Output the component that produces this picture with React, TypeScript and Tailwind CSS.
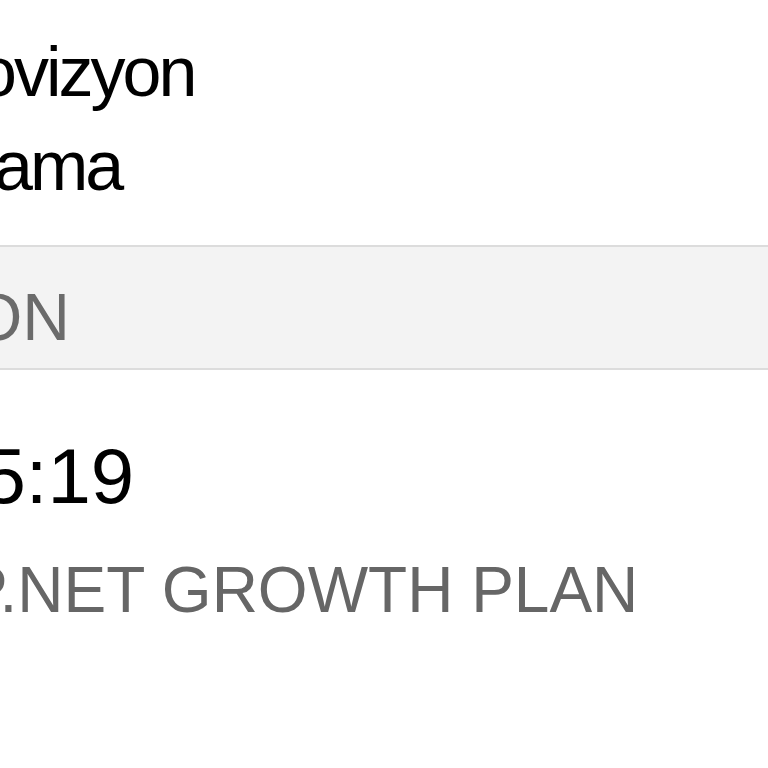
import React from 'react';

const font = { fontFamily: '"Liberation Sans", Arial, sans-serif' };

export default function App() {
  return (
    <div className="w-[768px] h-[768px] overflow-hidden bg-white" style={font}>
      {/* cells */}
      <div className="pt-[25px]">
        <div className="ml-[-22px] text-[70px] leading-[94px] tracking-[-3px] text-black whitespace-nowrap">ovizyon</div>
        <div className="ml-[-6px] text-[70px] leading-[94px] tracking-[-3px] text-black whitespace-nowrap">ama</div>
      </div>

      {/* section header */}
      <div className="mt-[32px] h-[125px] border-y-2 border-[#dcdcdc] bg-[#f3f3f3] pt-[37px]">
        <div className="ml-[-29px] text-[66px] leading-none text-[#6b6b6b] whitespace-nowrap">ON</div>
      </div>

      {/* detail */}
      <div className="pt-[67px]">
        <div className="ml-[-61px] text-[78px] leading-none text-black whitespace-nowrap">15:19</div>
        <div className="mt-[43px] ml-[-35px] text-[64px] leading-none text-[#666666] whitespace-nowrap">P.NET GROWTH PLAN</div>
      </div>
    </div>
  );
}
